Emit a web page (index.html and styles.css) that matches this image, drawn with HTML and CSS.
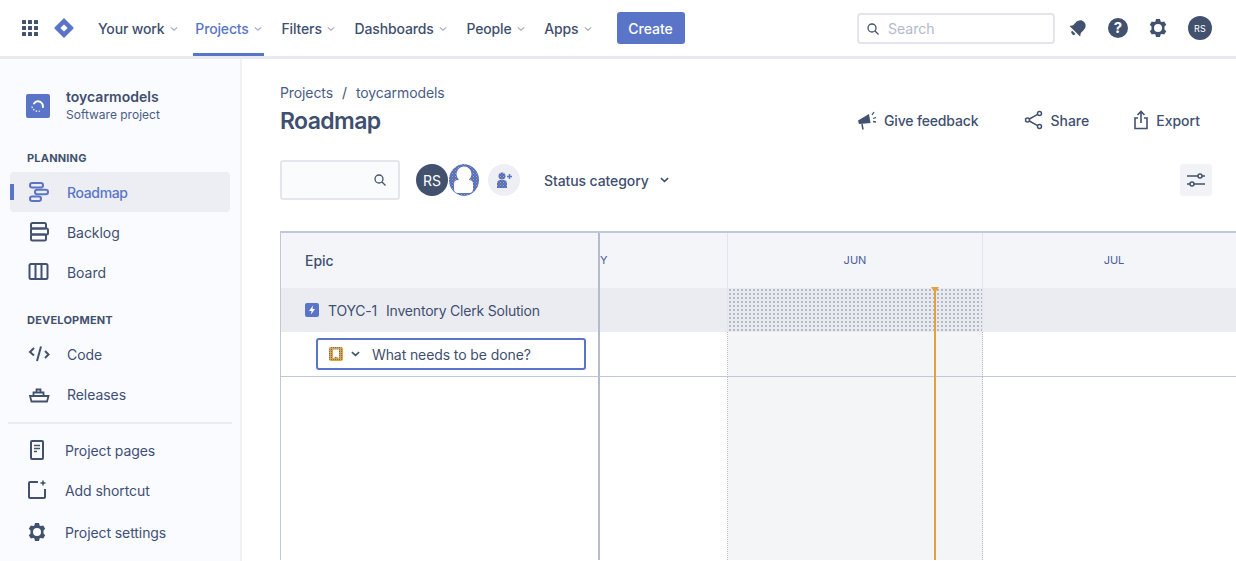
FILE: index.html
```html
<!DOCTYPE html>
<html lang="en">
<head>
<meta charset="UTF-8">
<meta name="viewport" content="width=device-width, initial-scale=1.0">
<title>Roadmap - toycarmodels</title>
<link rel="stylesheet" href="styles.css">
</head>
<body>

<!-- Top navigation -->
<header class="topbar">
    <svg class="apps" width="18" height="18" viewBox="0 0 18 18" fill="#42526e">
        <rect x="1" y="1" width="4" height="4" rx=".6"/><rect x="7" y="1" width="4" height="4" rx=".6"/><rect x="13" y="1" width="4" height="4" rx=".6"/>
        <rect x="1" y="7" width="4" height="4" rx=".6"/><rect x="7" y="7" width="4" height="4" rx=".6"/><rect x="13" y="7" width="4" height="4" rx=".6"/>
        <rect x="1" y="13" width="4" height="4" rx=".6"/><rect x="7" y="13" width="4" height="4" rx=".6"/><rect x="13" y="13" width="4" height="4" rx=".6"/>
    </svg>
    <svg class="logo" width="22" height="22" viewBox="0 0 22 22">
        <path d="M11 1l9.500 9.500a.7.7 0 0 1 0 1L11 21 1.500 11.500a.7.7 0 0 1 0-1z" fill="#5a75c7"/>
        <path d="M11 7.400l3.600 3.600-3.600 3.600L7.400 11z" fill="#fff"/>
    </svg>
    <nav class="nav">
        <a class="nav-item first">Your work<svg class="caret" viewBox="0 0 10 6"><path d="M1 1l4 3.500L9 1"/></svg></a>
        <a class="nav-item active">Projects<svg class="caret" viewBox="0 0 10 6"><path d="M1 1l4 3.500L9 1"/></svg></a>
        <a class="nav-item">Filters<svg class="caret" viewBox="0 0 10 6"><path d="M1 1l4 3.500L9 1"/></svg></a>
        <a class="nav-item">Dashboards<svg class="caret" viewBox="0 0 10 6"><path d="M1 1l4 3.500L9 1"/></svg></a>
        <a class="nav-item">People<svg class="caret" viewBox="0 0 10 6"><path d="M1 1l4 3.500L9 1"/></svg></a>
        <a class="nav-item">Apps<svg class="caret" viewBox="0 0 10 6"><path d="M1 1l4 3.500L9 1"/></svg></a>
    </nav>
    <button class="create" type="button">Create</button>
    <div class="top-right">
        <div class="search">
            <svg width="14" height="14" viewBox="0 0 14 14" fill="none" stroke="#42526e" stroke-width="1.300"><circle cx="6" cy="6" r="4"/><path d="M9 9l3.500 3.500"/></svg>
            <span>Search</span>
        </div>
        <svg class="top-icon bell" width="20" height="20" viewBox="0 0 20 20" fill="#42526e"><g transform="rotate(45 10 10)"><path d="M10 1.500c3.800 0 5.500 3 5.500 6.500v3.500l2 3H2.500l2-3V8c0-3.500 1.700-6.500 5.500-6.500z"/><path d="M7.500 16h5a2.500 2.500 0 0 1-5 0z"/></g></svg>
        <svg class="top-icon" width="22" height="22" viewBox="0 0 22 22"><circle cx="11" cy="11" r="10" fill="#42526e"/><text x="11" y="16" text-anchor="middle" class="help-mark">?</text></svg>
        <svg class="top-icon" width="20" height="20" viewBox="0 0 20 20"><use href="#gear"/></svg>
        <div class="avatar-small">RS</div>
    </div>
</header>

<svg class="defs" width="0" height="0">
    <symbol id="gear" viewBox="0 0 20 20">
        <path fill="#42526e" fill-rule="evenodd" d="M8 1h4l.6 2.400 1.300.7 2.300-.7 2 3.400-1.700 1.700v3l1.700 1.700-2 3.400-2.300-.7-1.300.7L12 19H8l-.6-2.400-1.300-.7-2.300.7-2-3.400 1.700-1.700v-3L1.800 6.800l2-3.400 2.300.7 1.300-.7zM10 6a4 4 0 1 0 0 8 4 4 0 0 0 0-8z"/>
    </symbol>
    <pattern id="dither" width="3" height="3" patternUnits="userSpaceOnUse">
        <rect width="3" height="3" fill="#4f6cc4"/>
        <rect width="1" height="1" fill="#d9a441"/>
        <rect x="1.500" y="1.500" width="1" height="1" fill="#8ea0d8"/>
    </pattern>
    <pattern id="dither-orange" width="2" height="2" patternUnits="userSpaceOnUse">
        <rect width="2" height="2" fill="#e0a33c"/>
        <rect width="1" height="1" fill="#6a6f8c"/>
    </pattern>
</svg>

<div class="layout">
    <!-- Project sidebar -->
    <aside class="sidebar">
        <div class="project">
            <div class="project-icon">
                <svg width="18" height="18" viewBox="0 0 18 18" fill="none" stroke="#fff"><path d="M5 6.500C7 3.500 11 3.500 13.500 7l.5 3" stroke-linecap="round" stroke-width="2"/><path d="M3 9.500c.5 3.500 4 5.500 8 4.500" stroke-dasharray="1.500 1.500" stroke-width="1.200"/></svg>
            </div>
            <div>
                <div class="project-name">toycarmodels</div>
                <div class="project-type">Software project</div>
            </div>
        </div>

        <h4 class="side-title">PLANNING</h4>
        <a class="side-item selected">
            <svg width="22" height="22" viewBox="0 0 22 22" fill="none" stroke="#5a75c7" stroke-width="2"><rect x="2" y="2" width="13" height="4.500" rx="2.200"/><rect x="7" y="8.800" width="13" height="4.500" rx="2.200"/><rect x="2" y="15.500" width="11" height="4.500" rx="2.200"/></svg>
            <span>Roadmap</span>
        </a>
        <a class="side-item">
            <svg width="22" height="22" viewBox="0 0 22 22" fill="none" stroke="#42526e" stroke-width="2"><rect x="3" y="2" width="15" height="5.500" rx="1.500"/><rect x="3" y="7.500" width="17" height="6" rx="1.500"/><rect x="3" y="13.500" width="15" height="6" rx="1.500"/></svg>
            <span>Backlog</span>
        </a>
        <a class="side-item">
            <svg width="22" height="22" viewBox="0 0 22 22" fill="none" stroke="#42526e" stroke-width="2"><rect x="1.500" y="3" width="18" height="15" rx="1.500"/><path d="M7.500 3v15M13.500 3v15"/></svg>
            <span>Board</span>
        </a>

        <h4 class="side-title dev">DEVELOPMENT</h4>
        <a class="side-item">
            <svg width="22" height="22" viewBox="0 0 22 22" fill="none" stroke="#42526e" stroke-width="2"><path d="M6 5L2 9l4 3.500M17 8l3.500 3.500L17 15M13 3.500L9 18"/></svg>
            <span>Code</span>
        </a>
        <a class="side-item">
            <svg width="22" height="22" viewBox="0 0 22 22" fill="none" stroke="#42526e" stroke-width="1.800"><path d="M2 13h18.500l-1.500 5.500H3.500zM5.500 13V9.500h10V13M8.500 9.500V6.500h4v3"/></svg>
            <span>Releases</span>
        </a>

        <div class="side-links">
            <a class="side-link">
                <svg width="20" height="22" viewBox="0 0 20 22" fill="none" stroke="#42526e" stroke-width="2"><rect x="4" y="2" width="12" height="18" rx="1"/><path d="M7 6.500h6M7 9.500h6M7 12.500h3" stroke-width="1.500"/></svg>
                <span>Project pages</span>
            </a>
            <a class="side-link">
                <svg width="20" height="22" viewBox="0 0 20 22" fill="none" stroke="#42526e" stroke-width="2"><path d="M11 3H3a1 1 0 0 0-1 1v14a1 1 0 0 0 1 1h14a1 1 0 0 0 1-1v-8"/><path d="M16 1.500v5M13.500 4h5" stroke-width="1.500"/></svg>
                <span>Add shortcut</span>
            </a>
            <a class="side-link">
                <svg width="20" height="20" viewBox="0 0 20 20"><use href="#gear"/></svg>
                <span>Project settings</span>
            </a>
        </div>
    </aside>

    <!-- Roadmap page -->
    <main class="main">
        <div class="crumbs"><a>Projects</a><span>/</span><a>toycarmodels</a></div>
        <div class="title-row">
            <h1>Roadmap</h1>
            <div class="actions">
                <a class="action feedback">
                    <svg width="22" height="22" viewBox="0 0 22 22" fill="#42526e"><path d="M2 11.500L13 5l1.500 9-8 .8-3.500.2z"/><path d="M6 15l1 5.500" stroke="#42526e" stroke-width="1.500"/><path d="M16 6l2-3M17 9.500l3-1M17 12.500l3 .5" stroke="#42526e" stroke-width="1.300" fill="none"/></svg>
                    Give feedback
                </a>
                <a class="action share">
                    <svg width="20" height="20" viewBox="0 0 20 20" fill="none" stroke="#42526e" stroke-width="1.500"><circle cx="3.500" cy="10" r="2"/><circle cx="15.500" cy="3.500" r="2"/><circle cx="15.500" cy="16.500" r="2"/><path d="M5.300 9l8.400-4.600M5.300 11l8.400 4.600"/></svg>
                    Share
                </a>
                <a class="action export">
                    <svg width="18" height="20" viewBox="0 0 18 20" fill="none" stroke="#42526e" stroke-width="1.600"><path d="M9 13V2M5.500 5L9 1.500 12.500 5M6 8H3v10.500h12V8h-3"/></svg>
                    Export
                </a>
            </div>
        </div>

        <div class="filters">
            <div class="filter-search">
                <svg width="14" height="14" viewBox="0 0 14 14" fill="none" stroke="#42526e" stroke-width="1.300"><circle cx="6" cy="6" r="4"/><path d="M9 9l3.500 3.500"/></svg>
            </div>
            <div class="avatars">
                <div class="avatar rs">RS</div>
                <div class="avatar blank">
                    <svg width="30" height="32" viewBox="0 0 30 32"><ellipse cx="15" cy="16" rx="15" ry="16" fill="url(#dither)"/><circle cx="15" cy="10" r="7.500" fill="#fff"/><rect x="5" y="16" width="19" height="13" rx="4" fill="#fff"/></svg>
                </div>
                <div class="avatar add">
                    <svg width="20" height="20" viewBox="0 0 20 20"><circle cx="8" cy="6" r="3.500" fill="url(#dither)"/><path d="M3 18v-4.500A3.500 3.500 0 0 1 6.500 10h3a3.500 3.500 0 0 1 3.500 3.500V18z" fill="url(#dither)"/><path d="M15.500 4v5M13 6.500h5" stroke="#5a75c7" stroke-width="1.500"/></svg>
                </div>
            </div>
            <div class="status">Status category<svg class="chev" viewBox="0 0 10 6"><path d="M1 1l4 3.500L9 1"/></svg></div>
            <button class="settings" type="button">
                <svg width="20" height="20" viewBox="0 0 20 20" fill="none" stroke="#42526e" stroke-width="1.500"><path d="M1 6h11M16 6h3M1 14h3M8 14h11"/><circle cx="14" cy="6" r="2"/><circle cx="6" cy="14" r="2"/></svg>
            </button>
        </div>

        <div class="gantt">
            <div class="cell epic-head">Epic</div>
            <div class="cell month may">Y</div>
            <div class="cell month june">JUN</div>
            <div class="cell month">JUL</div>

            <div class="cell epic-row">
                <svg width="14" height="14" viewBox="0 0 14 14"><rect width="14" height="14" rx="2" fill="#5a75c7"/><path d="M8 2.500L4 8h2.500L6 11.500 10 6H7.500z" fill="#fff"/></svg>
                <span class="key">TOYC-1</span><span>Inventory Clerk Solution</span>
            </div>
            <div class="cell band"></div>
            <div class="cell band june-band"></div>
            <div class="cell band"></div>

            <div class="cell input-row">
                <div class="new-issue">
                    <svg width="14" height="14" viewBox="0 0 14 14"><rect width="14" height="14" rx="2" fill="url(#dither-orange)"/><path d="M4 2.500h6v9L7 9.500l-3 2z" fill="#fff"/></svg>
                    <svg class="chev" viewBox="0 0 10 6"><path d="M1 1l4 3.500L9 1"/></svg>
                    <span>What needs to be done?</span>
                </div>
            </div>
            <div class="cell plain"></div>
            <div class="cell plain june-col"></div>
            <div class="cell plain last"></div>

            <div class="cell rest-left"></div>
            <div class="cell rest"></div>
            <div class="cell rest june-col"></div>
            <div class="cell rest last"></div>

            <!-- Today marker -->
            <div class="today"></div>
        </div>
    </main>
</div>

</body>
</html>
```

FILE: styles.css
```css
/* General styling */
* {
    box-sizing: border-box;
}

html, body {
    height: 100%;
}

body {
    margin: 0;
    overflow: hidden;
    font-family: Inter, "Liberation Sans", sans-serif;
    font-size: 14px;
    color: #404f75;
    background: #fff;
}

.defs {
    position: absolute;
}

/* Top navigation */
.topbar {
    display: flex;
    align-items: center;
    height: 59px;
    padding: 0 24px 0 21px;
    background: #fff;
    border-bottom: 3px solid #e9e9f0;
}

.logo {
    margin-left: 14px;
}

.nav {
    display: flex;
    align-self: stretch;
    margin-left: 23px;
    gap: 19.800px;
}

.nav-item {
    display: flex;
    align-items: center;
    gap: 5px;
    height: 56px;
    padding-top: 4px;
    font-weight: 500;
    font-size: 14px;
    letter-spacing: -0.15px;
    white-space: nowrap;
    color: #3f4f70;
    border-bottom: 3px solid transparent;
}

.nav-item.first {
    margin-right: -2px;
}

.nav-item.active {
    color: #5a75c7;
    margin: 0 -2px;
    padding: 4px 2px 0;
    border-bottom-color: #5a75c7;
}

.caret {
    width: 8px;
    height: 6px;
    fill: none;
    stroke: #a5adba;
    stroke-width: 1.500;
}

.active .caret {
    stroke: #9aaade;
}

.create {
    width: 68px;
    height: 32px;
    margin-left: 25px;
    color: #fff;
    background: #5a75c7;
    border: none;
    border-radius: 3px;
    font: 500 14px Inter, "Liberation Sans", sans-serif;
}

.top-right {
    display: flex;
    align-items: center;
    margin-left: auto;
}

.search {
    display: flex;
    align-items: center;
    gap: 8px;
    width: 198px;
    height: 31px;
    margin-top: 1px;
    padding-left: 7px;
    border: 2px solid #e3e4ec;
    border-radius: 4px;
    color: #b4b9cb;
}

.top-icon {
    display: block;
}

.bell {
    margin-left: 13px;
}

.top-icon + .top-icon {
    margin-left: 19px;
}

.help-mark {
    font: 700 15px Inter, "Liberation Sans", sans-serif;
    fill: #fff;
}

.avatar-small {
    display: flex;
    align-items: center;
    justify-content: center;
    width: 24px;
    height: 24px;
    margin-left: 20px;
    border-radius: 50%;
    background: #42526e;
    color: #fff;
    font-size: 9px;
    letter-spacing: 0.3px;
}

/* Page layout */
.layout {
    display: flex;
    height: calc(100% - 59px);
}

.sidebar {
    flex: 0 0 242px;
    padding: 0 8px 0 10px;
    background: #fafbfe;
    border-right: 2px solid #f0f0f5;
}

.project {
    display: flex;
    align-items: center;
    gap: 16px;
    padding: 29px 0 0 16px;
}

.project-icon {
    display: flex;
    align-items: center;
    justify-content: center;
    width: 24px;
    height: 24px;
    background: #5a75c7;
    border-radius: 2px;
}

.project-name {
    font-weight: 600;
    font-size: 14px;
    line-height: 18px;
    color: #3f4f70;
}

.project-type {
    font-size: 12px;
    line-height: 18px;
    color: #4a5c85;
}

.side-title {
    margin: 26px 0 6px 17px;
    font-size: 11px;
    line-height: 16px;
    font-weight: 700;
    letter-spacing: 0.2px;
    color: #42526e;
}

.side-title.dev {
    margin-top: 20px;
    margin-bottom: 6px;
}

.side-item {
    position: relative;
    display: flex;
    align-items: center;
    gap: 17px;
    width: 220px;
    height: 40px;
    padding-left: 18px;
    font-size: 14px;
    letter-spacing: -0.05px;
}

.side-item.selected {
    color: #5a75c7;
    background: #edeef4;
    border-radius: 4px;
    font-weight: 500;
    letter-spacing: -0.35px;
}

/* Blue mark on the selected row */
.side-item.selected::before {
    content: "";
    position: absolute;
    left: 0;
    top: 12px;
    width: 4px;
    height: 16px;
    background: #5a75c7;
}

.side-links {
    width: 224px;
    margin: 8px 0 0 -2px;
    padding-top: 6px;
    border-top: 2px solid #ebecf2;
}

.side-link {
    display: flex;
    align-items: center;
    gap: 18px;
    height: 40px;
    padding-left: 19px;
    letter-spacing: -0.08px;
}

.side-link:last-child {
    margin-top: 2px;
}

/* Main content */
.main {
    flex: 1;
    min-width: 0;
    padding: 24px 0 0 38px;
    overflow: hidden;
}

.crumbs {
    display: flex;
    gap: 9px;
    line-height: 20px;
    letter-spacing: -0.1px;
    color: #4a5c85;
}

.crumbs span {
    color: #42526e;
}

.title-row {
    display: flex;
    align-items: center;
    justify-content: space-between;
    height: 36px;
    padding-right: 36px;
}

h1 {
    margin: 0;
    font-size: 23px;
    font-weight: 600;
    letter-spacing: -0.6px;
    color: #3f4f70;
}

.actions {
    display: flex;
    margin-bottom: 2px;
}

.action {
    display: flex;
    align-items: center;
    gap: 6px;
    font-weight: 500;
    color: #3f4f70;
}

.feedback {
    letter-spacing: -0.15px;
}

.share {
    margin-left: 46px;
}

.export {
    margin-left: 43px;
}

.filters {
    display: flex;
    align-items: center;
    height: 40px;
    margin-top: 21px;
    padding-right: 24px;
}

.filter-search {
    display: flex;
    align-items: center;
    justify-content: flex-end;
    width: 120px;
    height: 40px;
    padding-right: 11px;
    background: #fafbfd;
    border: 2px solid #e5e6ed;
    border-radius: 3px;
}

.avatars {
    display: flex;
    align-items: center;
    margin-left: 16px;
}

.avatar {
    display: flex;
    align-items: center;
    justify-content: center;
    width: 32px;
    height: 32px;
    border-radius: 50%;
    overflow: hidden;
}

.rs {
    background: #42526e;
    color: #fff;
    font-size: 14px;
}

.add {
    margin-left: 8px;
    background: #eeeff4;
}

.status {
    display: flex;
    align-items: center;
    gap: 11px;
    margin-left: 24px;
    font-weight: 500;
    letter-spacing: -0.1px;
    color: #3f4f70;
}

.chev {
    width: 9px;
    height: 6px;
    fill: none;
    stroke: #42526e;
    stroke-width: 1.800;
}

.settings {
    display: flex;
    align-items: center;
    justify-content: center;
    width: 32px;
    height: 32px;
    margin-left: auto;
    padding: 0;
    background: #f2f3f6;
    border: none;
    border-radius: 3px;
}

/* Roadmap table */
.gantt {
    position: relative;
    display: grid;
    grid-template-columns: 319px 128px 255px 263px;
    grid-template-rows: 55px 44px 45px 1fr;
    width: 966px;
    height: 329px;
    margin-top: 31px;
    border-top: 2px solid #c1c7d9;
    border-left: 1px solid #c1c7d9;
}

.epic-head, .month {
    background: #f4f5f8;
}

.epic-head {
    display: flex;
    align-items: center;
    padding-left: 24px;
    font-weight: 500;
    color: #3f4f70;
    border-right: 2px solid #b5bbcd;
}

.month {
    display: flex;
    align-items: center;
    justify-content: center;
    padding-bottom: 2px;
    font-size: 11px;
    color: #4a5c9a;
    border-right: 1px solid #e3e4ec;
}

.month.may {
    justify-content: flex-start;
}

.epic-row {
    display: flex;
    align-items: center;
    gap: 9px;
    padding-left: 24px;
    letter-spacing: -0.2px;
    background: #ebecf2;
    border-right: 2px solid #b5bbcd;
    color: #3f4f70;
}

.band {
    background: #ebecf2;
    border-right: 1px solid #e3e4ec;
}

/* Dotted shading where the highlighted month crosses the epic row */
.june-band {
    background-color: #e9eaf0;
    background-image: radial-gradient(#b4b8c8 0.7px, transparent 1px);
    background-size: 4px 4px;
}

.input-row {
    padding: 6px 12px 0 35px;
    border-right: 2px solid #b5bbcd;
    border-bottom: 1px solid #c1c7d9;
}

.new-issue {
    display: flex;
    align-items: center;
    gap: 8px;
    height: 32px;
    padding-left: 11px;
    border: 2px solid #5a75c7;
    border-radius: 3px;
    letter-spacing: -0.1px;
}

.new-issue span {
    margin-left: 4px;
    color: #3f4f70;
}

.plain {
    border-right: 1px dotted #b5b9cc;
    border-bottom: 1px solid #c1c7d9;
}

.rest-left {
    border-right: 2px solid #b5bbcd;
}

.rest {
    border-right: 1px dotted #b5b9cc;
}

.last {
    border-right: none;
}

.june-col {
    background: #f4f5f7;
}

.today {
    position: absolute;
    left: 653px;
    top: 54px;
    bottom: 0;
    width: 2px;
    background: #e0a33c;
}

/* Little arrow on top of the today line */
.today::before {
    content: "";
    position: absolute;
    left: -3px;
    top: 0;
    border-left: 4px solid transparent;
    border-right: 4px solid transparent;
    border-top: 6px solid #e0a33c;
}
```
